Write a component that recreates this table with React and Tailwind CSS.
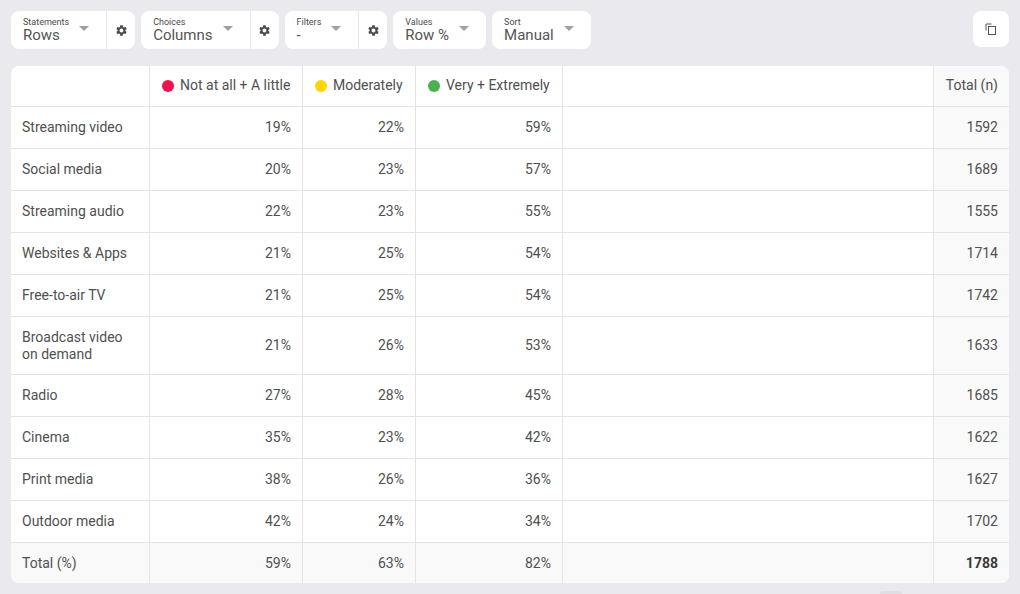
import React from "react";

const Caret = () => (
  <svg width="10" height="5" viewBox="0 0 10 5" className="mb-[4px] shrink-0">
    <path d="M0 0 L10 0 L5 5 Z" fill="#a0a0a0" />
  </svg>
);

const Gear = () => (
  <svg width="13" height="13" viewBox="0 0 24 24">
    <path
      fill="#4a4a4a"
      d="M19.14 12.94c.04-.3.06-.61.06-.94 0-.32-.02-.64-.07-.94l2.03-1.58a.49.49 0 0 0 .12-.61l-1.92-3.32a.488.488 0 0 0-.59-.22l-2.39.96c-.5-.38-1.03-.7-1.62-.94l-.36-2.54a.484.484 0 0 0-.48-.41h-3.84c-.24 0-.43.17-.47.41l-.36 2.54c-.59.24-1.13.57-1.62.94l-2.39-.96c-.22-.08-.47 0-.59.22L2.74 8.87c-.12.21-.08.47.12.61l2.03 1.58c-.05.3-.09.63-.09.94s.02.64.07.94l-2.03 1.58a.49.49 0 0 0-.12.61l1.92 3.32c.12.22.37.29.59.22l2.39-.96c.5.38 1.03.7 1.62.94l.36 2.54c.05.24.24.41.48.41h3.84c.24 0 .44-.17.47-.41l.36-2.54c.59-.24 1.13-.56 1.62-.94l2.39.96c.22.08.47 0 .59-.22l1.92-3.32c.12-.22.07-.47-.12-.61l-2.01-1.58zM12 15.6c-1.98 0-3.6-1.62-3.6-3.6s1.62-3.6 3.6-3.6 3.6 1.62 3.6 3.6-1.62 3.6-3.6 3.6z"
    />
  </svg>
);

const Select = ({ label, value }) => (
  <div className="flex items-center gap-[10px] pl-[12px] pr-[17px] h-full">
    <div className="flex flex-col">
      <span className="text-[9px] leading-[10px] text-[#4a4a4a]">{label}</span>
      <span className="text-[15px] leading-[17px] text-[#555]">{value}</span>
    </div>
    <Caret />
  </div>
);

const Group = ({ label, value, gear }) => (
  <div className="flex items-stretch h-[38px] bg-white rounded-[8px]">
    <Select label={label} value={value} />
    {gear && (
      <div className="flex items-center justify-center w-[29px] border-l border-[#e6e6e6]">
        <Gear />
      </div>
    )}
  </div>
);

const rows = [
  ["Streaming video", "19%", "22%", "59%", "1592"],
  ["Social media", "20%", "23%", "57%", "1689"],
  ["Streaming audio", "22%", "23%", "55%", "1555"],
  ["Websites & Apps", "21%", "25%", "54%", "1714"],
  ["Free-to-air TV", "21%", "25%", "54%", "1742"],
  ["Broadcast video on demand", "21%", "26%", "53%", "1633"],
  ["Radio", "27%", "28%", "45%", "1685"],
  ["Cinema", "35%", "23%", "42%", "1622"],
  ["Print media", "38%", "26%", "36%", "1627"],
  ["Outdoor media", "42%", "24%", "34%", "1702"],
];

const Dot = ({ color }) => (
  <span className={`inline-block shrink-0 w-[12px] h-[12px] rounded-full mr-[6px] ${color}`} />
);

export default function App() {
  return (
    <div
      className="w-[1020px] h-[594px] bg-[#e9e9ee] overflow-hidden relative text-[#505050]"
      style={{ fontFamily: "Roboto, 'Liberation Sans', sans-serif" }}
    >
      <div className="flex items-start pl-[11px] pr-[11px] pt-[11px]">
        <div className="flex gap-[6px]">
          <Group label="Statements" value="Rows" gear />
          <Group label="Choices" value="Columns" gear />
          <Group label="Filters" value="-" gear />
          <Group label="Values" value="Row %" />
          <Group label="Sort" value="Manual" />
        </div>
        <div className="ml-auto w-[36px] h-[36px] bg-white rounded-[8px] flex items-center justify-center">
          <svg width="12" height="12" viewBox="0 0 12 12" fill="none">
            <path d="M1 7.5 V1 H6.5" stroke="#555" strokeWidth="1" />
            <rect x="3.5" y="3.5" width="7" height="8" stroke="#555" strokeWidth="1" />
          </svg>
        </div>
      </div>

      <div className="mx-[11px] mt-[17px] bg-white rounded-[8px] overflow-hidden text-[14px]">
        <div className="grid grid-cols-[139px_153px_113px_147px_371px_1fr] leading-[17px]">
          {/* header */}
          <div className="min-h-[41px] pb-[1px] border-b border-r border-[#e4e4e4]" />
          <div className="min-h-[41px] pb-[1px] border-b border-r border-[#e4e4e4] flex items-center pl-[12px] whitespace-nowrap">
            <Dot color="bg-[#f0124e]" />
            Not at all + A little
          </div>
          <div className="min-h-[41px] pb-[1px] border-b border-r border-[#e4e4e4] flex items-center pl-[12px] whitespace-nowrap">
            <Dot color="bg-[#ffd500]" />
            Moderately
          </div>
          <div className="min-h-[41px] pb-[1px] border-b border-r border-[#e4e4e4] flex items-center pl-[12px] whitespace-nowrap">
            <Dot color="bg-[#4caf50]" />
            Very + Extremely
          </div>
          <div className="min-h-[41px] border-b border-r border-[#e4e4e4]" />
          <div className="min-h-[41px] pb-[1px] border-b border-[#e4e4e4] bg-[#f9f9f9] flex items-center justify-end px-[11px]">
            Total (n)
          </div>

          {rows.map((r) => (
            <React.Fragment key={r[0]}>
              <div className="min-h-[42px] py-[11.5px] border-b border-r border-[#e4e4e4] flex items-center pl-[11px] pr-[20px]">
                {r[0]}
              </div>
              <div className="min-h-[42px] border-b border-r border-[#e4e4e4] flex items-center justify-end px-[11px]">
                {r[1]}
              </div>
              <div className="min-h-[42px] border-b border-r border-[#e4e4e4] flex items-center justify-end px-[11px]">
                {r[2]}
              </div>
              <div className="min-h-[42px] border-b border-r border-[#e4e4e4] flex items-center justify-end px-[11px]">
                {r[3]}
              </div>
              <div className="min-h-[42px] border-b border-r border-[#e4e4e4]" />
              <div className="min-h-[42px] border-b border-[#e4e4e4] bg-[#f9f9f9] flex items-center justify-end px-[11px]">
                {r[4]}
              </div>
            </React.Fragment>
          ))}

          <div className="min-h-[40px] bg-[#f9f9f9] border-r border-[#e4e4e4] flex items-center pl-[11px]">
            Total (%)
          </div>
          <div className="min-h-[40px] bg-[#f9f9f9] border-r border-[#e4e4e4] flex items-center justify-end px-[11px]">
            59%
          </div>
          <div className="min-h-[40px] bg-[#f9f9f9] border-r border-[#e4e4e4] flex items-center justify-end px-[11px]">
            63%
          </div>
          <div className="min-h-[40px] bg-[#f9f9f9] border-r border-[#e4e4e4] flex items-center justify-end px-[11px]">
            82%
          </div>
          <div className="min-h-[40px] bg-[#f9f9f9] border-r border-[#e4e4e4]" />
          <div className="min-h-[40px] bg-[#f9f9f9] flex items-center justify-end px-[11px] font-bold text-[#3a3a3a]">
            1788
          </div>
        </div>
      </div>
      <div className="absolute left-[880px] top-[591px] w-[22px] h-[6px] rounded-[3px] bg-[#dedee3]" />
    </div>
  );
}
